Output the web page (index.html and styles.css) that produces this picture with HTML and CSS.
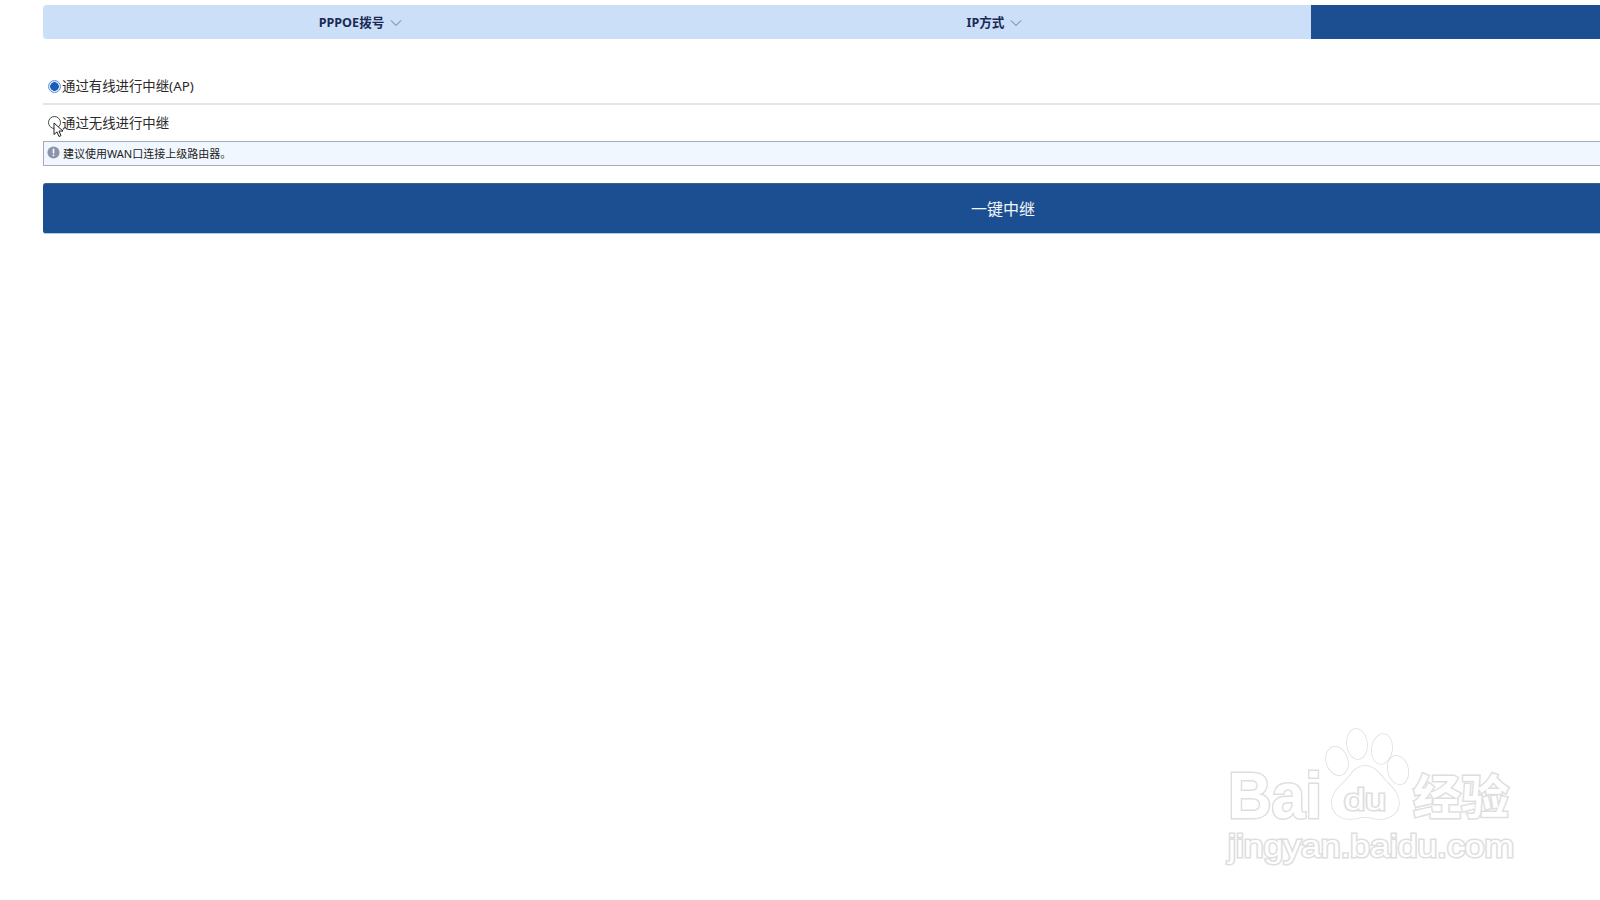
FILE: index.html
```html
<!DOCTYPE html>
<html lang="zh-CN">
<head>
<meta charset="utf-8">
<title>一键中继</title>
<link rel="stylesheet" href="styles.css">
</head>
<body>
<main class="panel">
  <nav class="tabs">
    <div class="tab"><span>PPPOE拨号</span><svg class="chev" viewBox="0 0 12 8"><path d="M1 1.5 6 6.5 11 1.5"/></svg></div>
    <div class="tab"><span>IP方式</span><svg class="chev" viewBox="0 0 12 8"><path d="M1 1.5 6 6.5 11 1.5"/></svg></div>
    <div class="tab tab-active"></div>
  </nav>
  <label class="option option-first"><input class="radio" type="radio" name="mode" checked><span>通过有线进行中继(AP)</span></label>
  <label class="option option-second"><input class="radio" type="radio" name="mode"><span>通过无线进行中继</span></label>
  <div class="notice">
    <svg class="notice-icon" viewBox="0 0 14 14"><circle cx="7" cy="7" r="6.5"/><rect x="6.1" y="2.8" width="1.8" height="5.4" rx=".6"/><rect x="6.1" y="9.2" width="1.8" height="1.8" rx=".6"/></svg>
    <span>建议使用WAN口连接上级路由器。</span>
  </div>
  <button class="submit" type="button">一键中继</button>
</main>
<svg class="cursor" viewBox="0 0 12 16"><path d="M1 1v11.5l3-2.6 2 4.6 2-.9-2-4.5h4z"/></svg>
<svg class="watermark" viewBox="0 0 310 150">
  <g class="paw">
    <ellipse cx="107" cy="36" rx="10.5" ry="14.5" transform="rotate(-18 107 36)"/>
    <ellipse cx="127" cy="19" rx="10" ry="15" transform="rotate(-6 127 19)"/>
    <ellipse cx="152" cy="24" rx="10" ry="15" transform="rotate(8 152 24)"/>
    <ellipse cx="168" cy="45" rx="10" ry="14.5" transform="rotate(-14 168 45)"/>
    <path d="M135 41c-9 0-13 7-18 13-6 7-15 12-15 24 0 10 8 16 18 16 6 0 10-2 15-2 5 0 9 2 15 2 11 0 19-7 19-16 0-11-9-17-15-24-5-6-10-13-19-13z"/>
  </g>
  <text class="wm-big" x="-2" y="93" textLength="94" lengthAdjust="spacingAndGlyphs">Bai</text>
  <text class="wm-du" x="114" y="85" textLength="42" lengthAdjust="spacingAndGlyphs">du</text>
  <text class="wm-cn" x="183" y="89" textLength="96" lengthAdjust="spacingAndGlyphs">经验</text>
  <text class="wm-url" x="-2" y="132" textLength="286" lengthAdjust="spacingAndGlyphs">jingyan.baidu.com</text>
</svg>
</body>
</html>
```
FILE: styles.css
```css
html, body {
  margin: 0;
  height: 100%;
  overflow: hidden;
  background: #fff;
}
body {
  font-family: "Noto Sans", "Noto Sans CJK SC", sans-serif;
  color: #222;
  position: relative;
}
.panel {
  width: 1920px;
  margin-left: 43px;
  padding-top: 5px;
}
.tabs {
  display: grid;
  grid-template-columns: 634px 634px 652px;
  height: 34px;
  background: #cbe0f8;
  border-radius: 4px 0 0 4px;
  overflow: hidden;
}
.tab {
  display: flex;
  align-items: center;
  justify-content: center;
  gap: 6px;
  padding: 0 0 2px 1px;
  box-sizing: border-box;
  font-size: 12.6px;
  font-weight: 700;
  color: #1b2a55;
}
.tab-active {
  background: #1c4f91;
}
.chev {
  width: 12px;
  height: 8px;
  margin-top: 4px;
  fill: none;
  stroke: #5c7594;
  stroke-width: 1;
}
.option {
  display: flex;
  align-items: center;
  font-size: 13.4px;
  line-height: 20px;
  color: #2a2a2a;
}
.option-first {
  margin-top: 30px;
  height: 36px;
  border-bottom: 2px solid #e3e5e8;
  box-sizing: border-box;
}
.option-second {
  box-sizing: border-box;
  height: 36px;
  padding-bottom: 1px;
}
.radio {
  appearance: none;
  box-sizing: border-box;
  width: 13px;
  height: 13px;
  margin: 0 1px 0 5px;
  border: 1px solid #4a4a4a;
  border-radius: 50%;
  background: #fff;
  flex: none;
}
.radio:checked {
  border: 1px solid #5b93dc;
  background: radial-gradient(circle, #1c5cb5 0 4px, #dfeafa 4.6px);
}
.notice {
  display: flex;
  align-items: center;
  gap: 3px;
  box-sizing: border-box;
  height: 25px;
  padding: 0 0 1px 3px;
  background: #f1f7fe;
  border: 1px solid #a6abb4;
  font-size: 11px;
  color: #222;
}
.notice-icon {
  width: 13px;
  height: 13px;
  margin-top: -2px;
  flex: none;
}
.notice-icon circle {
  fill: #8b93a8;
}
.notice-icon rect {
  fill: #f1f7fe;
}
.submit {
  display: block;
  width: 100%;
  height: 51px;
  margin-top: 17px;
  padding: 0 0 2px;
  border: 0;
  border-top: 1px solid #3d6288;
  border-bottom: 1px solid #a9d0ea;
  border-radius: 3px 0 0 3px;
  background: #1c4f91;
  color: #f4f7fb;
  font-family: inherit;
  font-size: 16px;
}
.cursor {
  position: absolute;
  left: 53px;
  top: 122px;
  width: 12px;
  height: 16px;
  fill: #fff;
  stroke: #222;
  stroke-width: 1;
}
.watermark {
  position: absolute;
  left: 1230px;
  top: 725px;
  width: 310px;
  height: 150px;
  overflow: visible;
}
.watermark text,
.paw ellipse,
.paw path {
  fill: #fff;
  stroke: #dedede;
  paint-order: stroke;
}
.watermark text {
  stroke-width: 3;
}
.paw ellipse,
.paw path {
  stroke-width: 1.5;
}
.wm-big {
  font-family: "Liberation Sans", sans-serif;
  font-size: 64px;
  font-weight: 700;
}
.wm-du {
  font-family: "Liberation Sans", sans-serif;
  font-size: 30px;
}
.wm-cn {
  font-family: "Noto Sans CJK SC", sans-serif;
  font-size: 47px;
  font-weight: 700;
}
.wm-url {
  font-family: "Liberation Sans", sans-serif;
  font-size: 32px;
}
```
